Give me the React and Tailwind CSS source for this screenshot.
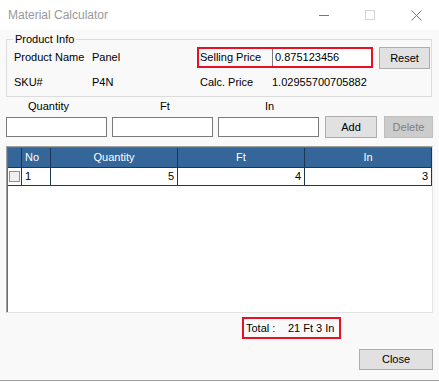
import React from 'react';

const GRID_ROWS = [{ no: 1, quantity: 5, ft: 4, inch: 3 }];

function TitleButton({ children }) {
  return (
    <div className="w-[46px] h-[30px] flex items-center justify-center">{children}</div>
  );
}

function WinButton({ label, className = '' }) {
  return (
    <div
      className={`h-full flex items-center justify-center border border-[#adadad] bg-[#e1e1e1] ${className}`}
    >
      {label}
    </div>
  );
}

export default function App() {
  return (
    <div className="w-[439px] h-[382px] flex flex-col bg-[#f9f9f9] text-[11px] leading-[13px] text-black font-['Liberation_Sans',Arial,sans-serif]">
      {/* Title bar */}
      <div className="h-[30px] flex items-center bg-white shrink-0">
        <span className="flex-1 pl-[8px] text-[12px] text-[#999999]">Material Calculator</span>
        <TitleButton>
          <svg width="10" height="10" viewBox="0 0 10 10">
            <path d="M0 5.5h10" stroke="#777" strokeWidth="1" />
          </svg>
        </TitleButton>
        <TitleButton>
          <svg width="10" height="10" viewBox="0 0 10 10">
            <rect x="0.5" y="0.5" width="9" height="9" fill="none" stroke="#d4d4d4" />
          </svg>
        </TitleButton>
        <TitleButton>
          <svg width="11" height="11" viewBox="0 0 11 11">
            <path d="M0.5 0.5l10 10M10.5 0.5l-10 10" stroke="#777" strokeWidth="1" />
          </svg>
        </TitleButton>
      </div>

      {/* Body */}
      <div className="h-[350px] shrink-0 flex flex-col">
        {/* Product Info group */}
        <fieldset className="ml-[6px] mt-[3px] w-[426px] h-[64px] border border-[#dcdcdc]">
          <legend className="ml-[6px] px-[2px]">Product Info</legend>
          <div className="flex items-start mt-[1px] h-[22px]">
            <span className="ml-[7px] w-[78px] h-[21px] flex items-center">Product Name</span>
            <span className="w-[105px] h-[21px] flex items-center">Panel</span>
            <div className="w-[176px] h-[21px] flex border-2 border-[#e81123]">
              <span className="w-[73px] pl-[1px] flex items-center">Selling Price</span>
              <div className="flex-1 flex items-center pl-[2px] bg-white border-l border-[#7a7a7a]">
                0.875123456
              </div>
            </div>
            <WinButton label="Reset" className="ml-[6px] w-[51px] h-[22px]" />
          </div>
          <div className="flex items-center mt-[2px] h-[22px]">
            <span className="ml-[7px] w-[78px]">SKU#</span>
            <span className="w-[108px]">P4N</span>
            <span className="w-[72px]">Calc. Price</span>
            <span>1.02955700705882</span>
          </div>
        </fieldset>

        {/* Entry labels */}
        <div className="flex mt-[3px] h-[13px]">
          <span className="ml-[28px] w-[132px]">Quantity</span>
          <span className="w-[105px]">Ft</span>
          <span>In</span>
        </div>

        {/* Entry inputs */}
        <div className="flex items-center mt-[3px] h-[22px]">
          <input className="ml-[6px] w-[101px] h-[20px] bg-white border border-[#7a7a7a] outline-none" />
          <input className="ml-[5px] w-[101px] h-[20px] bg-white border border-[#7a7a7a] outline-none" />
          <input className="ml-[5px] w-[101px] h-[20px] bg-white border border-[#7a7a7a] outline-none" />
          <WinButton label="Add" className="ml-[6px] w-[52px]" />
          <div className="ml-[7px] w-[49px] h-full flex items-center justify-center bg-[#cccccc] border border-[#bfbfbf] text-[#7f7f7f]">
            Delete
          </div>
        </div>

        {/* Grid */}
        <div className="ml-[6px] mt-[8px] w-[427px] h-[167px] bg-white border border-t-[#a0a0a0] border-l-[#a0a0a0] border-r-[#e3e3e3] border-b-[#e3e3e3]">
          <div className="h-full border-t border-l border-[#696969]">
            <div className="flex h-[20px] bg-[#346699] text-white">
              <div className="w-[14px] border-r border-b border-[#1d3857]" />
              <div className="w-[29px] pl-[3px] flex items-center border-r border-b border-[#1d3857]">No</div>
              <div className="w-[127px] flex items-center justify-center border-r border-b border-[#1d3857]">Quantity</div>
              <div className="w-[127px] flex items-center justify-center border-r border-b border-[#1d3857]">Ft</div>
              <div className="flex-1 flex items-center justify-center border-r border-b border-[#1d3857]">In</div>
            </div>
            {GRID_ROWS.map((r) => (
              <div key={r.no} className="flex h-[18px]">
                <div className="w-[14px] flex items-center pl-[1px] border-r border-b border-[#1d3857]">
                  <span className="w-[11px] h-[11px] border border-[#8f8f8f] bg-[#f0f0f0]" />
                </div>
                <div className="w-[29px] pl-[3px] flex items-center border-r border-b border-[#1d3857]">{r.no}</div>
                <div className="w-[127px] pr-[3px] flex items-center justify-end border-r border-b border-[#1d3857]">{r.quantity}</div>
                <div className="w-[127px] pr-[3px] flex items-center justify-end border-r border-b border-[#1d3857]">{r.ft}</div>
                <div className="flex-1 pr-[3px] flex items-center justify-end border-r border-b border-[#1d3857]">{r.inch}</div>
              </div>
            ))}
          </div>
        </div>

        {/* Total */}
        <div className="ml-[242px] mt-[4px] w-[99px] h-[22px] flex items-center pl-[2px] border-2 border-[#e81123]">
          <span className="w-[42px]">Total :</span>
          <span>21 Ft 3 In</span>
        </div>

        <WinButton label="Close" className="ml-[359px] mt-[10px] w-[74px] !h-[21px]" />
      </div>
      <div className="h-[1px] bg-[#a0a0a0] shrink-0" />
    </div>
  );
}
